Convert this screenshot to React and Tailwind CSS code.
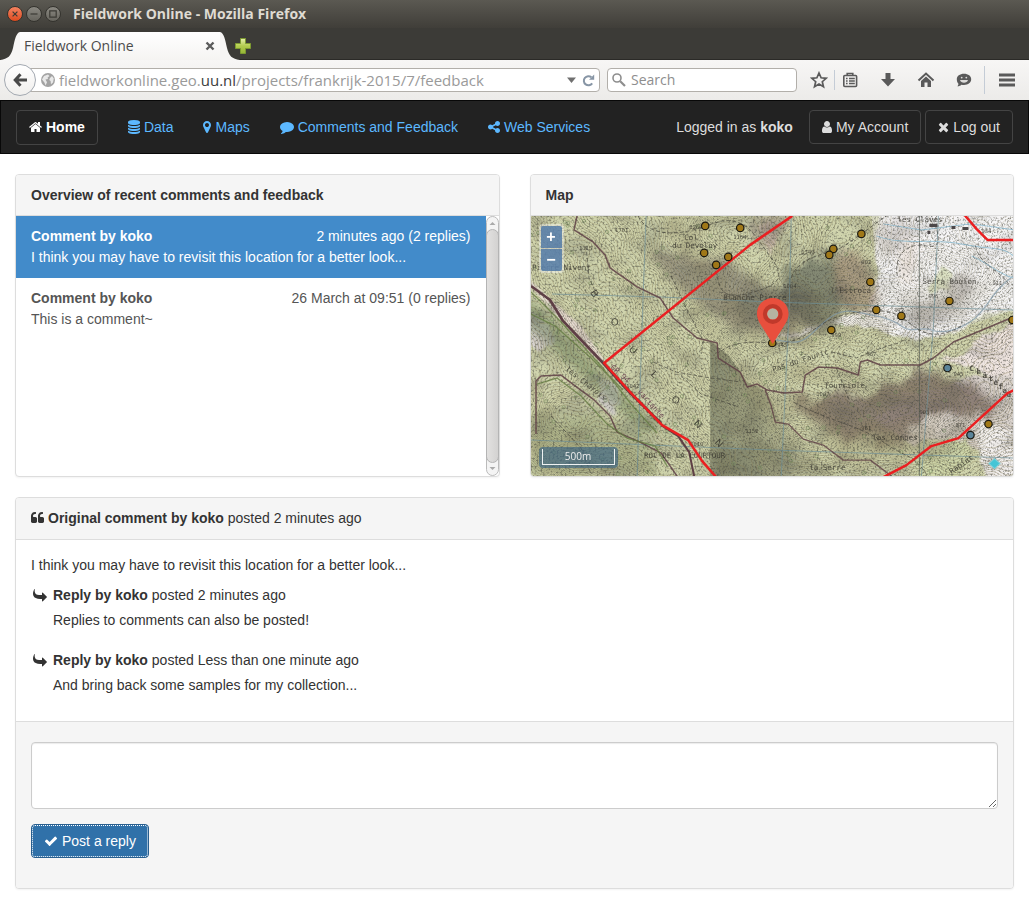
import React from "react";

/* ---------- glyphs: 128 units per pixel at 14px, y axis pointing up ---------- */
const GLYPHS = {
  home: { w: 1664, d: "M1408 544v-480q0 -26 -19 -45t-45 -19h-384v384h-256v-384h-384q-26 0 -45 19t-19 45v480q0 1 .5 3t.5 3l575 474l575 -474q1 -2 1 -6zM1631 613l-62 -74q-8 -9 -21 -11h-3q-13 0 -21 7l-692 577l-692 -577q-12 -8 -24 -7q-13 2 -21 11l-62 74q-8 10 -7 23.5t11 21.5l719 599q32 26 76 26t76 -26l244 -204v195q0 14 9 23t23 9h192q14 0 23 -9t9 -23v-408l219 -182q10 -8 11 -21.5t-7 -23.5z" },
  database: { w: 1536, d: "M768 768q237 0 443 43t325 127v-170q0 -69 -103 -128t-280 -93.5t-385 -34.5t-385 34.5t-280 93.5t-103 128v170q119 -84 325 -127t443 -43zM768 0q237 0 443 43t325 127v-170q0 -69 -103 -128t-280 -93.5t-385 -34.5t-385 34.5t-280 93.5t-103 128v170q119 -84 325 -127t443 -43zM768 384q237 0 443 43t325 127v-170q0 -69 -103 -128t-280 -93.5t-385 -34.5t-385 34.5t-280 93.5t-103 128v170q119 -84 325 -127t443 -43zM768 1536q208 0 385 -34.5t280 -93.5t103 -128v-128q0 -69 -103 -128t-280 -93.5t-385 -34.5t-385 34.5t-280 93.5t-103 128v128q0 69 103 128t280 93.5t385 34.5z" },
  marker: { w: 1024, d: "M768 896q0 106 -75 181t-181 75t-181 -75t-75 -181t75 -181t181 -75t181 75t75 181zM1024 896q0 -109 -33 -179l-364 -774q-16 -33 -47.5 -52t-67.5 -19t-67.5 19t-46.5 52l-365 774q-33 70 -33 179q0 212 150 362t362 150t362 -150t150 -362z" },
  comment: { w: 1792, d: "M1792 640q0 -174 -120 -321.5t-326 -233t-450 -85.5q-70 0 -145 8q-198 -175 -460 -242q-49 -14 -114 -22q-17 -2 -30.5 9t-17.5 29v1q-3 4 -0.5 12t2 10t4.5 9.5l6 9t7 8.5t8 9q7 8 31 34.5t34.5 38t31 39.5t32.5 51t27 59t26 76q-157 89 -247.5 220t-90.5 281q0 130 71 248.5t191 204.5t286 136.5t348 50.5q244 0 450 -85.5t326 -233t120 -321.5z" },
  share: { w: 1536, d: "M1216 512q133 0 226.5 -93.5t93.5 -226.5t-93.5 -226.5t-226.5 -93.5t-226.5 93.5t-93.5 226.5q0 12 2 34l-360 180q-92 -86 -218 -86q-133 0 -226.5 93.5t-93.5 226.5t93.5 226.5t226.5 93.5q126 0 218 -86l360 180q-2 22 -2 34q0 133 93.5 226.5t226.5 93.5t226.5 -93.5t93.5 -226.5t-93.5 -226.5t-226.5 -93.5q-126 0 -218 86l-360 -180q2 -22 2 -34t-2 -34l360 -180q92 86 218 86z" },
  user: { w: 1280, d: "M1280 137q0 -109 -62.5 -187t-150.5 -78h-854q-88 0 -150.5 78t-62.5 187q0 85 8.5 160.5t31.5 152t58.5 131t94 89t134.5 34.5q131 -128 313 -128t313 128q76 0 134.5 -34.5t94 -89t58.5 -131t31.5 -152t8.5 -160.5zM1024 1024q0 -159 -112.5 -271.5t-271.5 -112.5t-271.5 112.5t-112.5 271.5t112.5 271.5t271.5 112.5t271.5 -112.5t112.5 -271.5z" },
  times: { w: 1408, d: "M1298 214q0 -40 -28 -68l-136 -136q-28 -28 -68 -28t-68 28l-294 294l-294 -294q-28 -28 -68 -28t-68 28l-136 136q-28 28 -28 68t28 68l294 294l-294 294q-28 28 -28 68t28 68l136 136q28 28 68 28t68 -28l294 -294l294 294q28 28 68 28t68 -28l136 -136q28 -28 28 -68t-28 -68l-294 -294l294 -294q28 -28 28 -68z" },
  check: { w: 1792, d: "M1671 970q0 -40 -28 -68l-724 -724l-136 -136q-28 -28 -68 -28t-68 28l-136 136l-362 362q-28 28 -28 68t28 68l136 136q28 28 68 28t68 -28l294 -295l656 657q28 28 68 28t68 -28l136 -136q28 -28 28 -68z" },
  quote: { w: 1664, d: "M768 576v-384q0 -80 -56 -136t-136 -56h-384q-80 0 -136 56t-56 136v704q0 104 40.5 198.5t109.5 163.5t163.5 109.5t198.5 40.5h64q26 0 45 -19t19 -45v-128q0 -26 -19 -45t-45 -19h-64q-106 0 -181 -75t-75 -181v-32q0 -40 28 -68t68 -28h224q80 0 136 -56t56 -136zM1664 576v-384q0 -80 -56 -136t-136 -56h-384q-80 0 -136 56t-56 136v704q0 104 40.5 198.5t109.5 163.5t163.5 109.5t198.5 40.5h64q26 0 45 -19t19 -45v-128q0 -26 -19 -45t-45 -19h-64q-106 0 -181 -75t-75 -181v-32q0 -40 28 -68t68 -28h224q80 0 136 -56t56 -136z" },
  reply: { w: 1792, flip: true, d: "M1792 896q0 -26 -19 -45l-512 -512q-19 -19 -45 -19t-45 19t-19 45v256h-224q-98 0 -175.5 -6t-154 -21.5t-133 -42.5t-105.5 -69.5t-80 -101t-48.5 -138.5t-17.5 -181q0 -55 5 -123q0 -6 2.5 -23.5t2.5 -26.5q0 -15 -8.5 -25t-23.5 -10q-16 0 -28 17q-7 9 -13 22t-13.5 30t-10.5 24q-127 285 -127 451q0 199 53 333q162 403 875 403h224v256q0 26 19 45t45 19t45 -19l512 -512q19 -19 19 -45z" },
};

function Glyph({ name }) {
  const g = GLYPHS[name];
  return (
    <svg
      aria-hidden="true"
      width={g.w / 128}
      height="14"
      viewBox={`0 0 ${g.w} 1792`}
      fill="currentColor"
      className="shrink-0"
    >
      <path d={g.d} transform={g.flip ? "translate(0 256)" : "matrix(1 0 0 -1 0 1536)"} />
    </svg>
  );
}

/* ------------------------------ browser window ------------------------------ */
function WindowButton({ label, close, children }) {
  return (
    <button
      aria-label={label}
      className={
        close
          ? "h-4 w-4 rounded-full border border-[#34332e] bg-linear-to-b from-[#f4825f] to-[#dd4a1c]"
          : "h-4 w-4 rounded-full border border-[#34332e] bg-linear-to-b from-[#8b8982] to-[#66645d]"
      }
    >
      <svg viewBox="0 0 14 14" width="14" height="14" fill="none" stroke="#3b3a34" strokeWidth="1.2">
        {children}
      </svg>
    </button>
  );
}

function TitleBar() {
  return (
    <header className="flex h-7 items-center gap-[3px] bg-linear-to-b from-[#5b5952] to-[#403e39] px-[7px]">
      <WindowButton label="Close window" close>
        <path d="M4.6 4.6l4.8 4.8M9.4 4.6l-4.8 4.8" />
      </WindowButton>
      <WindowButton label="Minimize window">
        <path d="M3.5 7h7" />
      </WindowButton>
      <WindowButton label="Maximize window">
        <path d="M3.8 3.8h6.4v6.4H3.8z" />
      </WindowButton>
      <span className="pl-[9px] text-sm font-bold text-[#dfdbd2]">Fieldwork Online - Mozilla Firefox</span>
    </header>
  );
}

function TabStrip() {
  return (
    <div className="flex h-8 items-end border-b border-[#2b2a27] bg-[#3c3b37]">
      <svg aria-hidden="true" width="20" height="29" viewBox="0 0 20 29" className="-mb-px shrink-0">
        <path d="M0 29C8 28 11 25 13 17C15 8 16 2 20 1V29Z" fill="#f6f5f4" />
      </svg>
      <div className="-mb-px flex h-7 w-[200px] items-center justify-between bg-linear-to-b from-white to-[#f5f4f2] px-1 text-sm text-[#4c4c4c]">
        <span>Fieldwork Online</span>
        <button aria-label="Close tab" className="mr-px">
          <svg width="10" height="10" viewBox="0 0 10 10" stroke="#5c5c5c" strokeWidth="2.4">
            <path d="M1.500 1.500l7 7M8.500 1.500l-7 7" />
          </svg>
        </button>
      </div>
      <svg aria-hidden="true" width="20" height="29" viewBox="0 0 20 29" className="-mb-px shrink-0">
        <path d="M20 29C12 28 9 25 7 17C5 8 4 2 0 1V29Z" fill="#f6f5f4" />
      </svg>
      <button aria-label="New tab" className="mb-1 -ml-1.5">
        <svg width="18" height="18" viewBox="0 0 18 18">
          <defs>
            <linearGradient id="plus" x2="0" y2="1">
              <stop stopColor="#e6f0ae" />
              <stop offset=".5" stopColor="#b3cc4e" />
              <stop offset="1" stopColor="#94b535" />
            </linearGradient>
          </defs>
          <path d="M6.500 1.500h5v5h5v5h-5v5h-5v-5h-5v-5h5z" fill="url(#plus)" stroke="#7d9a30" />
        </svg>
      </button>
    </div>
  );
}

function ToolButton({ label, children }) {
  return (
    <button aria-label={label} className="flex h-6 w-5 items-center justify-center text-[#5a5a5a]">
      <svg width="18" height="18" viewBox="0 0 18 18" fill="none" stroke="currentColor">
        {children}
      </svg>
    </button>
  );
}

function Toolbar() {
  return (
    <div className="flex h-10 items-center bg-linear-to-b from-[#f7f6f5] to-[#ecebe9] pr-3 pl-1">
      <button
        aria-label="Back"
        className="z-10 flex h-8 w-8 shrink-0 items-center justify-center rounded-full border border-[#a3a9b1] bg-linear-to-b from-white to-[#f0efed]"
      >
        <svg width="14" height="14" viewBox="0 0 14 14" fill="none" stroke="#494949" strokeWidth="3">
          <path d="M7.500 1.200L2.200 7l5.300 5.800M2.500 7H14" />
        </svg>
      </button>
      <div className="-ml-1.5 flex h-6 min-w-0 flex-1 items-center rounded-r-sm border border-[#b2afaa] bg-white pr-1 pl-2.5 text-[#9a9a9a]">
        <svg aria-hidden="true" width="14" height="14" viewBox="0 0 14 14" className="mr-1 shrink-0">
          <circle cx="7" cy="7" r="7" fill="#a3a3a3" />
          <path d="M1 6.500L3 3l4-1.600L8.500 3 6.600 4.500 7 6 4.500 6.600 6 9.200 4.600 12.600 3.400 9.400zM9 5l2-2 1.800 2.400L12 9.500l-2 1.800L9.600 8 8.200 7z" fill="#e8e8e8" />
        </svg>
        <div
          role="textbox"
          aria-label="Address"
          contentEditable
          suppressContentEditableWarning
          className="min-w-0 flex-1 truncate text-[15px] leading-5 outline-none"
        >
          fieldworkonline.geo.<span className="text-[#3c3c3c]">uu.nl</span>/projects/frankrijk-2015/7/feedback
        </div>
        <button aria-label="Show history" className="mr-1.5">
          <svg width="9" height="6" viewBox="0 0 9 6" fill="#707070">
            <path d="M0 .5h9L4.500 6z" />
          </svg>
        </button>
        <button aria-label="Reload">
          <svg width="13" height="13" viewBox="0 0 13 13" fill="none" stroke="#8795a5" strokeWidth="2">
            <path d="M10.200 9.400A4.600 4.600 0 1 1 9.400 3.200" />
            <path d="M12.200.5v5.300H7z" fill="#8795a5" stroke="none" />
          </svg>
        </button>
      </div>
      <label className="ml-[7px] flex h-6 w-[190px] items-center gap-[5px] rounded-sm border border-[#b2afaa] bg-white px-1">
        <svg aria-hidden="true" width="14" height="14" viewBox="0 0 14 14" fill="none" stroke="#8e8e8e" className="shrink-0">
          <circle cx="5" cy="5" r="4" strokeWidth="1.600" />
          <path d="M8.200 8.200L13 13" strokeWidth="2.200" />
        </svg>
        <input
          aria-label="Search"
          placeholder="Search"
          className="w-full min-w-0 text-sm leading-5 outline-none placeholder:text-[#8e8e8e]"
        />
      </label>
      <div className="ml-3 flex items-center">
        <ToolButton label="Bookmark this page">
          <path d="M9 2l2.100 4.800 5.100.5-3.900 3.400 1.200 5.100L9 13.100l-4.500 2.700 1.200-5.100L1.800 7.300l5.100-.5z" strokeWidth="1.700" />
        </ToolButton>
        <span className="ml-[5px] h-5 w-px bg-[#c4ccd6]" />
        <span className="ml-[5px]">
          <ToolButton label="Show bookmarks">
            <rect x="2.800" y="4.500" width="12.800" height="11" rx="1" strokeWidth="1.600" />
            <path d="M6.200 4V2.500h5.600V4" strokeWidth="1.600" />
            <path d="M5 7.500h1.600M8 7.500h5.800M5 10h1.600M8 10h5.800M5 12.500h1.600M8 12.500h5.800" strokeWidth="1.300" />
          </ToolButton>
        </span>
        <span className="ml-[18px]">
          <ToolButton label="Downloads">
            <path d="M6.500 2h5v6H16l-7 7.500L2 8h4.500z" fill="currentColor" stroke="none" />
          </ToolButton>
        </span>
        <span className="ml-[18px]">
          <ToolButton label="Home page">
            <path d="M1.500 9.500L9 2.500l7.500 7" strokeWidth="2" />
            <path d="M4 10L9 5.500l5 4.500v6h-3.500v-4.500h-3V16H4z" fill="currentColor" stroke="none" />
          </ToolButton>
        </span>
        <span className="ml-[18px]">
          <ToolButton label="Start a conversation">
            <path d="M9 2.800c4.200 0 7.200 2.300 7.200 5.500S13.200 14 9 14c-1 0-1.800-.1-2.600-.3C5.400 14.700 4 15.300 2.300 15.200c.8-.7 1.200-1.500 1.100-2.500C2.300 11.600 1.800 10 1.800 8.300c0-3.200 3-5.500 7.200-5.500z" fill="currentColor" stroke="none" />
            <path d="M5 9h8c-.5 1.800-2 2.700-4 2.700S5.500 10.800 5 9z" fill="#dcdbd9" stroke="none" />
            <circle cx="6.700" cy="6.600" r=".9" fill="#dcdbd9" stroke="none" />
            <circle cx="11.300" cy="6.600" r=".9" fill="#dcdbd9" stroke="none" />
          </ToolButton>
        </span>
        <span className="ml-2.5 h-7 w-px bg-[#c4ccd6]" />
        <span className="ml-3">
          <ToolButton label="Open menu">
            <path d="M1 4h16M1 9h16M1 14h16" strokeWidth="3" />
          </ToolButton>
        </span>
      </div>
    </div>
  );
}

/* --------------------------------- site nav --------------------------------- */
const NAV_LINKS = [
  { icon: "database", label: "Data" },
  { icon: "marker", label: "Maps" },
  { icon: "comment", label: "Comments and Feedback" },
  { icon: "share", label: "Web Services" },
];

function SiteNav() {
  return (
    <nav className="flex h-[54px] items-center justify-between border border-[#080808] bg-[#222] px-[15px] text-[#ddd]">
      <div className="flex items-center gap-[30px]">
        <a href="#home" className="flex h-[35px] items-center gap-1 rounded border border-[#444] px-3 font-bold text-white">
          <Glyph name="home" />
          Home
        </a>
        {NAV_LINKS.map((link) => (
          <a key={link.label} href="#section" className="flex items-center gap-1 text-[#5cb8ff]">
            <Glyph name={link.icon} />
            {link.label}
          </a>
        ))}
      </div>
      <div className="flex items-center">
        <p className="mr-4">
          Logged in as <b>koko</b>
        </p>
        <a href="#account" className="flex h-[34px] items-center gap-1 rounded border border-[#444] px-3">
          <Glyph name="user" />
          My Account
        </a>
        <a href="#logout" className="ml-1 flex h-[34px] items-center gap-1 rounded border border-[#444] px-3">
          <Glyph name="times" />
          Log out
        </a>
      </div>
    </nav>
  );
}

/* ----------------------------------- map ------------------------------------ */
const MAP_W = 482;
const MAP_H = 260;
const bump = (x, y, cx, cy, rx, ry, h) =>
  h * Math.exp(-(((x - cx) / rx) ** 2) - ((y - cy) / ry) ** 2);

function terrain(x, y) {
  return (
    0.12 * (Math.min(x, 250) * 0.8 - y * 0.6) +
    bump(x, y, 190, 20, 45, 30, 8) +
    bump(x, y, 235, 85, 70, 42, 10) +
    bump(x, y, 310, 30, 50, 70, 10) +
    bump(x, y, 410, 60, 48, 32, 9) +
    bump(x, y, 350, 200, 90, 35, 12) +
    bump(x, y, 30, 210, 60, 40, 9) +
    bump(x, y, 260, 170, 60, 22, 8) +
    0.7 * Math.sin(x / 17 + y / 31) * Math.cos(y / 15 - x / 40) +
    0.35 * Math.sin(x / 7 - y / 9) +
    0.22 * Math.cos(x / 5 + y / 6)
  );
}

function contourPath(step, interval) {
  const out = [];
  for (let y = 0; y < MAP_H; y += step) {
    for (let x = 0; x < MAP_W; x += step) {
      const c = [
        [x, y, terrain(x, y)],
        [x + step, y, terrain(x + step, y)],
        [x + step, y + step, terrain(x + step, y + step)],
        [x, y + step, terrain(x, y + step)],
      ];
      const vs = c.map((p) => p[2]);
      const hi = Math.max(...vs);
      const first = Math.ceil(Math.min(...vs) / interval) * interval;
      for (let level = first; level < hi; level += interval) {
        const pts = [];
        for (let i = 0; i < 4; i++) {
          const a = c[i];
          const b = c[(i + 1) % 4];
          if (a[2] < level !== b[2] < level) {
            const t = (level - a[2]) / (b[2] - a[2]);
            pts.push(`${(a[0] + t * (b[0] - a[0])).toFixed(1)} ${(a[1] + t * (b[1] - a[1])).toFixed(1)}`);
          }
        }
        if (pts.length >= 2) out.push(`M${pts[0]}L${pts[1]}`);
      }
    }
  }
  return out.join("");
}
const CONTOURS = contourPath(3, 0.4);

const SAMPLES = [
  [174, 10], [209, 12], [173, 37], [197, 41], [185, 49], [330, 18], [302, 33], [298, 39],
  [339, 66], [418, 85], [345, 94], [370, 100], [300, 114], [241, 127], [481, 104], [457, 208],
];
const WATER_SAMPLES = [[416, 152], [439, 219]];

const TREES = Array.from({ length: 190 }, (_, i) => [
  (i * 97.3 + 13 * Math.sin(i * 3.1) + 482) % 482,
  (i * 57.7 + 19 * Math.cos(i * 1.7) + 260) % 260,
]).filter(([x, y]) => !(x > 340 && y < 130) && !(x > 420 && y > 140) && !(x > 200 && x < 290 && y < 115));

const PLACE_LABELS = [
  ["les Claves", 366, 6], ["Serra Boulon", 391, 68], ["l'Estroca", 299, 77],
  ["Tourriole", 293, 172], ["las Combes", 341, 224], ["Blanche Pierre", 192, 84],
  ["Col", 153, 24], ["du Devoluy", 141, 32], ["Pierre Nivent", 1, 54],
  ["ROC DE LA COURTOUR", 113, 242], ["la Serre", 278, 254],
];
const SPACED_LABELS = [
  ["B", 61, 81, 60], ["O", 80, 109, 20], ["U", 99, 137, 40], ["L", 121, 162, 45], ["O", 141, 187, 20], ["N", 164, 211, 45], ["N", 185, 230, 45],
];
const CHATEFAUX = [["C", 438, 155], ["h", 445, 158], ["â", 451, 162], ["t", 457, 165], ["e", 462, 169], ["f", 467, 173], ["a", 471, 177], ["u", 475, 181]];
const HEIGHTS = [
  ["1315", 48, 34], ["1701", 84, 16], ["1164", 202, 23], ["1260", 158, 13], ["1340", 270, 38], ["902", 330, 48],
  ["1004", 252, 72], ["996", 397, 82], ["934", 450, 17], ["911", 461, 69], ["972", 363, 96], ["999", 300, 121],
  ["943", 246, 131], ["967", 335, 140], ["945", 422, 160], ["903", 388, 198], ["871", 424, 211], ["1152", 214, 217],
  ["1010", 159, 230], ["1007", 285, 180], ["961", 330, 214], ["1042", 95, 172],
];

function TopoMap() {
  return (
    <svg
      role="img"
      aria-label="Topographic map with sample locations"
      viewBox="0 0 482 260"
      preserveAspectRatio="xMidYMid slice"
      className="block h-full w-full"
    >
      <defs>
        <filter id="soft" x="-30%" y="-30%" width="160%" height="160%">
          <feTurbulence type="fractalNoise" baseFrequency=".04" numOctaves="3" seed="9" result="n" />
          <feGaussianBlur in="SourceGraphic" stdDeviation="5" />
          <feDisplacementMap in2="n" scale="22" />
        </filter>
        <filter id="edge" x="-10%" y="-10%" width="120%" height="120%">
          <feTurbulence type="fractalNoise" baseFrequency=".05" numOctaves="3" seed="4" result="n" />
          <feDisplacementMap in="SourceGraphic" in2="n" scale="12" />
          <feGaussianBlur stdDeviation="1" />
        </filter>
        <filter id="relief" x="0" y="0" width="100%" height="100%" colorInterpolationFilters="sRGB">
          <feTurbulence type="fractalNoise" baseFrequency=".03 .045" numOctaves="4" seed="11" />
          <feColorMatrix values="0 0 0 0 .3  0 0 0 0 .3  0 0 0 0 .28  1.8 0 0 0 -.85" />
        </filter>
        <filter id="grain" x="0" y="0" width="100%" height="100%" colorInterpolationFilters="sRGB">
          <feTurbulence type="fractalNoise" baseFrequency=".5" numOctaves="2" seed="7" />
          <feColorMatrix values="0 0 0 0 .27  0 0 0 0 .27  0 0 0 0 .24  0 3 0 0 -1.45" />
        </filter>
        <linearGradient id="shade" x2="1" y2=".35">
          <stop stopColor="#2f3428" stopOpacity=".48" />
          <stop offset=".45" stopColor="#2f3428" stopOpacity=".28" />
          <stop offset=".8" stopColor="#2f3428" stopOpacity="0" />
        </linearGradient>
      </defs>

      <rect width="482" height="260" fill="#d0d4ad" />
      <g filter="url(#edge)">
        <path d="M355-10H500V92L462 96 420 116 390 124 365 122 345 112 300 108 262 122 240 122 300 104 335 94 350 60 342 30z" fill="#f6f5f4" />
        <path d="M482 104L440 130 412 146 440 152 480 170 500 150z" fill="#efe5e0" />
        <path d="M440 160L500 160V280H460L450 235 420 222 380 228 340 200 370 180z" fill="#dbd4ce" />
        <path d="M0 96L20 112 24 124 8 136 0 130z" fill="#d8d3d0" />
        <path d="M-6 60L20 84 50 110 70 140 74 148 60 138 30 104 0 70z" fill="#eee2dc" />
        <path d="M66 160L85 168 92 190 82 200 68 186z" fill="#d5d0cc" />
        <path d="M396 72L412 52 422 58 416 74 398 78z" fill="#cdd6a6" />
        <path d="M448 204L482 214V260H455L448 236z" fill="#f3f0ee" />
        <path d="M392 240L436 222 440 246 420 262H382z" fill="#cfd7ab" />
        <path d="M226 10L240 6 248 24 240 40z" fill="#e9ddc6" />
      </g>
      <g filter="url(#soft)">
        <path d="M110 30L150 36 200 48 250 80 290 110 240 122 196 108 150 74z" fill="#7c736a" opacity=".6" />
        <path d="M225 0L262 0 246 22 222 30z" fill="#8e7d76" opacity=".6" />
        <path d="M255 50L300 40 318 70 320 95 290 112 250 100z" fill="#62685a" opacity=".7" />
        <ellipse cx="245" cy="88" rx="42" ry="22" fill="#5c5a50" opacity=".45" />
        <path d="M304 40L330 38 348 80 340 96 312 92z" fill="#9b8574" opacity=".65" />
        <path d="M345 10L372 2 382 16 350 42z" fill="#b3aba5" opacity=".7" />
        <path d="M432 56L444 66 434 92 390 110 374 102 382 86 414 82z" fill="#8d8580" opacity=".75" />
        <ellipse cx="376" cy="45" rx="12" ry="24" fill="#dcbda4" opacity=".4" />
        <path d="M255 185L330 176 400 156 440 166 466 190 440 202 396 196 372 228 310 222z" fill="#7b6b62" opacity=".8" />
        <path d="M0 200L60 196 110 215 130 260H0z" fill="#65704a" opacity=".3" />
        <path d="M-10 78L20 100 85 170 140 220 110 215 40 150-10 105z" fill="#62774f" opacity=".5" />
        <path d="M180 232L250 222 310 262H180z" fill="#4d5040" opacity=".3" />
      </g>
      <rect width="482" height="260" filter="url(#relief)" opacity=".4" />
      <path d="M179 125L198 140 216 166 236 176 250 206 280 226 330 262H179z" fill="url(#shade)" />

      <path d={CONTOURS} fill="none" stroke="#857b55" strokeWidth=".7" opacity=".55" />
      <path d="M340 0H482V94L440 108 400 122 352 108z" fill="#f7f7f8" opacity=".35" />
      <g fill="none" stroke="#6f8657" strokeWidth=".7" opacity=".75">
        {TREES.map(([x, y], i) => (
          <circle key={i} cx={x} cy={y} r="1.600" />
        ))}
      </g>
      <rect width="482" height="260" filter="url(#grain)" opacity=".6" />

      <g fill="none" stroke="#6f8f96" strokeWidth="1" opacity=".7">
        <path d="M115 0L112 80 106 260M21 78L130 81 240 86 360 90 482 94M0 224L120 229 240 234 482 242M260 0L258 90 250 260M407 0L402 110 390 260" />
        <path d="M482 60C460 75 455 95 440 105S410 118 400 114 380 118 370 110 345 100 325 96 295 104 280 118 255 124 242 124" stroke="#7f98a8" strokeWidth="1.300" />
        <path d="M345 20C370 30 400 22 430 28S470 30 482 40M440 40C455 46 470 60 482 62M352 8L390 14 440 8 482 14" stroke="#7fb5cf" />
      </g>
      <path d="M388 0V260" stroke="#4d554d" strokeWidth="1" opacity=".65" />

      <g fill="none" stroke="#5e3f45" strokeLinejoin="round">
        <path d="M46 0L43 14 62 26 74 39 79 52 106 71 129 82 142 102 166 122 186 127 187 142 209 156 216 171 226 168 236 174 252 177 271 176 274 159 287 151 306 152 327 159 329 146 336 144 349 149 389 149 402 142 422 126 446 116 482 101" strokeWidth="1.500" opacity=".85" />
        <path d="M0 70L19 84 32 105 52 126 72 147 100 178 130 207" strokeWidth="2.600" />
        <path d="M130 209L147 220 158 236 163 260" strokeWidth="2" />
        <path d="M5 218V165L10 160 30 159 43 169 62 183 79 200 86 216 109 226 130 237 146 260" strokeWidth="1.500" opacity=".85" />
        <path d="M234 174L240 190 244 206 257 208 272 223 292 229 312 244 339 244 360 260" strokeWidth="1.300" opacity=".8" />
      </g>
      <g fill="none" stroke="#61793f" strokeWidth="1.300" opacity=".75">
        <path d="M0 76L30 106 70 150 100 188 126 217M0 98L24 110 60 142 92 174M6 168L26 162 50 180 76 208 96 222 124 230 136 250M112 190L126 206" />
      </g>
      <g fill="none" stroke="#3f3d37" strokeWidth=".8" strokeDasharray="4 2" opacity=".8">
        <path d="M107 0C115 18 140 20 162 14S190 2 205 6 225 22 240 42 248 70 215 78 190 60 182 52" />
        <path d="M190 135C205 124 225 126 240 127S265 126 285 112 320 96 345 95 375 108 390 115 420 116 430 110" />
        <path d="M122 146L145 156 180 162 210 166 M150 160L170 178 205 190M260 62C265 44 290 38 300 36S335 14 355 0M140 60L155 92 172 125 170 138M366 60C362 40 375 26 395 30S405 12 400 0M444 30C448 50 470 54 478 70M300 136L325 142 350 132 370 126M305 152L318 184M55 30L58 62 68 84M20 200L50 232 60 258M262 186C300 206 330 210 352 226S380 236 395 258" />
      </g>
      <path d="M82 158l34 36 14 14" fill="none" stroke="#4b3a3a" strokeWidth="4" strokeDasharray="2 3" opacity=".7" />
      <path d="M398 8h8v3h-8zM420 10h4v3h-4zM431 11h6v3h-6zM396 15h3v3h-3z" fill="#4c4748" />

      <g fontFamily="'DejaVu Sans Mono', monospace" fill="#34322c">
        <g fontSize="7.500" opacity=".8">
          {PLACE_LABELS.map(([t, x, y]) => (
            <text key={t} x={x} y={y}>{t}</text>
          ))}
          <text x="79" y="152" transform="rotate(42 79 152)" fill="#5d2c44">GR 94</text>
          <text x="106" y="176" transform="rotate(48 106 176)" fill="#5d2c44">variante</text>
          <text x="34" y="154" transform="rotate(38 34 154)">les Charois</text>
          <text x="242" y="156" transform="rotate(-18 242 156)">Pas du Fauric</text>
          <text x="420" y="258" transform="rotate(-34 420 258)">Rapiat</text>
          {CHATEFAUX.map(([t, x, y]) => (
            <text key={x} x={x} y={y} fontWeight="bold">{t}</text>
          ))}
        </g>
        <g fontSize="5.500" opacity=".8">
          {HEIGHTS.map(([t, x, y]) => (
            <text key={t} x={x} y={y}>{t}</text>
          ))}
        </g>
        <g fontSize="10" opacity=".85" fontFamily="'Liberation Sans', sans-serif">
          {SPACED_LABELS.map(([t, x, y, r]) => (
            <text key={x} x={x} y={y} transform={`rotate(${r} ${x + 3} ${y - 4})`}>{t}</text>
          ))}
        </g>
      </g>

      <g fill="none" stroke="#ea1f21" strokeWidth="2.500" strokeLinejoin="round">
        <path d="M261 0L219 29 73 147 100 177 131 209 157 224 171 245 185 261" />
        <path d="M352 261L375 249 400 230 427 222 476 177 483 174M433-1L445 13 456 24H483" />
      </g>
      <g stroke="#1c1a12" strokeWidth="1.200">
        {SAMPLES.map(([x, y]) => (
          <circle key={`${x}-${y}`} cx={x} cy={y} r="3.700" fill="#a07818" />
        ))}
        {WATER_SAMPLES.map(([x, y]) => (
          <circle key={`${x}-${y}`} cx={x} cy={y} r="3.700" fill="#5b8499" />
        ))}
      </g>
      <path d="M463 242.500l5.500 5-5.500 5-5.500-5z" fill="#45c5d6" stroke="#7ccfd9" strokeWidth="1" />
      <circle cx="241.500" cy="98" r="6.500" fill="#b5b3a0" />
      <path
        fillRule="evenodd"
        d="M241.500 82c8.800 0 15.800 6.900 15.800 15.600 0 3.500-1 6.300-2.600 9.200L241.500 128l-13.200-21.200c-1.600-2.900-2.600-5.700-2.600-9.200 0-8.700 7-15.600 15.800-15.600zm0 10.400a5.600 5.600 0 1 0 0 11.200 5.600 5.600 0 1 0 0-11.200z"
        fill="#e84f3d"
      />
      <circle cx="241.500" cy="98" r="7.900" fill="none" stroke="#c0392b" strokeWidth="4" />
    </svg>
  );
}

function MapView() {
  return (
    <div className="relative h-[260px] overflow-hidden">
      <TopoMap />
      <div className="absolute top-2 left-2 flex flex-col gap-px rounded bg-white/40 p-0.5 text-base font-bold text-white">
        <button aria-label="Zoom in" className="flex h-[22px] w-[21px] items-center justify-center rounded-t-xs bg-[#4a74a4]/80">
          +
        </button>
        <button aria-label="Zoom out" className="flex h-[22px] w-[21px] items-center justify-center rounded-b-xs bg-[#4a74a4]/80">
          −
        </button>
      </div>
      <div className="absolute bottom-2 left-2 rounded bg-[#3c6482]/65 px-[3px] pt-0.5 pb-[3px]">
        <div className="h-4 w-[73px] border border-t-0 border-white/90 text-center font-[Open_Sans] text-[10px] leading-[14px] text-[#eee]">
          500m
        </div>
      </div>
    </div>
  );
}

/* ---------------------------------- panels ---------------------------------- */
const PANEL = "overflow-hidden rounded border border-[#ddd] bg-white shadow-xs";

const COMMENTS = [
  { author: "koko", meta: "2 minutes ago (2 replies)", text: "I think you may have to revisit this location for a better look...", active: true },
  { author: "koko", meta: "26 March at 09:51 (0 replies)", text: "This is a comment~" },
];

function ScrollTrack() {
  return (
    <div aria-hidden="true" className="flex w-[13px] shrink-0 flex-col rounded-lg border border-[#bbb] bg-[#f4f4f4]">
      <svg width="11" height="12" viewBox="0 0 11 12" fill="#aaa">
        <path d="M2.500 8h6L5.500 5z" />
      </svg>
      <div className="-mx-px flex-1 rounded-lg border border-[#b4b4b4] bg-linear-to-r from-[#e2e1e0] to-[#d3d2d1]" />
      <svg width="11" height="12" viewBox="0 0 11 12" fill="#aaa">
        <path d="M2.500 4h6L5.500 7z" />
      </svg>
    </div>
  );
}

function OverviewPanel() {
  return (
    <section className={PANEL}>
      <h2 className="border-b border-[#ddd] bg-[#f5f5f5] px-[15px] py-2.5 font-bold">
        Overview of recent comments and feedback
      </h2>
      <div className="flex h-[260px]">
        <ul className="min-w-0 flex-1">
          {COMMENTS.map((c) => (
            <li key={c.meta}>
              <a
                href="#comment"
                className={
                  c.active
                    ? "block bg-[#428bca] px-[15px] py-2.5 leading-[21px] text-white"
                    : "block px-[15px] py-2.5 leading-[21px] text-[#555]"
                }
              >
                <span className="flex justify-between">
                  <b>Comment by {c.author}</b>
                  <span>{c.meta}</span>
                </span>
                <span className="block truncate">{c.text}</span>
              </a>
            </li>
          ))}
        </ul>
        <ScrollTrack />
      </div>
    </section>
  );
}

const REPLIES = [
  { author: "koko", when: "2 minutes ago", text: "Replies to comments can also be posted!" },
  { author: "koko", when: "Less than one minute ago", text: "And bring back some samples for my collection..." },
];

function ThreadPanel() {
  return (
    <section className={PANEL}>
      <h2 className="flex items-center gap-1 border-b border-[#ddd] bg-[#f5f5f5] px-[15px] pt-2.5 pb-[11px]">
        <Glyph name="quote" />
        <span>
          <b>Original comment by koko</b> posted 2 minutes ago
        </span>
      </h2>
      <div className="px-[15px] pt-[15px] pb-[26px]">
        <p>I think you may have to revisit this location for a better look...</p>
        <ul className="mt-2.5 flex flex-col gap-5">
          {REPLIES.map((r) => (
            <li key={r.when} className="flex items-start gap-1.5 pl-0.5">
              <span className="pt-[3px]">
                <Glyph name="reply" />
              </span>
              <div className="flex flex-col gap-[5px]">
                <p>
                  <b>Reply by {r.author}</b> posted {r.when}
                </p>
                <p>{r.text}</p>
              </div>
            </li>
          ))}
        </ul>
      </div>
      <form className="border-t border-[#ddd] bg-[#f5f5f5] px-[15px] pt-5 pb-[30px]" onSubmit={(e) => e.preventDefault()}>
        <textarea
          aria-label="Your reply"
          className="block h-[67px] w-full resize-y rounded border border-[#ccc] bg-white px-3 py-1.5 shadow-[inset_0_1px_1px_rgba(0,0,0,0.08)] outline-none"
        />
        <button
          type="submit"
          className="mt-[15px] flex h-[34px] items-center gap-1 rounded border border-[#285e8e] bg-[#3071a9] px-3 text-white outline-1 -outline-offset-2 outline-white outline-dotted"
        >
          <Glyph name="check" />
          Post a reply
        </button>
      </form>
    </section>
  );
}

export default function App() {
  return (
    <div className="min-h-screen bg-white font-['Liberation_Sans',Arial,sans-serif] text-sm leading-5 text-[#333]">
      <div className="font-['Open_Sans','Noto_Sans',sans-serif]">
        <TitleBar />
        <TabStrip />
        <Toolbar />
      </div>
      <SiteNav />
      <main className="flex flex-col gap-5 px-[15px] py-5">
        <div className="grid grid-cols-2 gap-[30px]">
          <OverviewPanel />
          <section className={PANEL}>
            <h2 className="border-b border-[#ddd] bg-[#f5f5f5] px-[15px] py-2.5 font-bold">Map</h2>
            <MapView />
          </section>
        </div>
        <ThreadPanel />
      </main>
    </div>
  );
}
